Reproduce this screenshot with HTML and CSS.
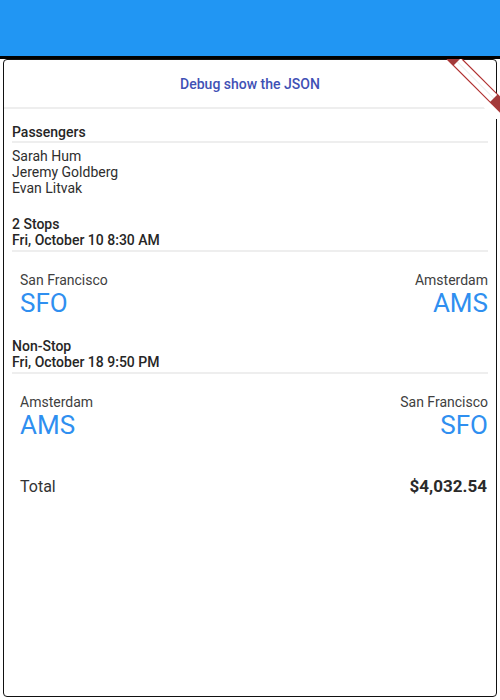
FILE: index.html
```html
<!DOCTYPE html>
<html>
<head>
<meta charset="utf-8">
<link rel="stylesheet" href="styles.css">
</head>
<body>
<div class="appbar"></div>
<div class="shadow"></div>
<div class="stage">
  <div class="card">
    <div class="card-head">Debug show the JSON</div>
    <div class="section">
      <div class="heading ruled">Passengers</div>
      <div class="passengers">
        <div>Sarah Hum</div>
        <div>Jeremy Goldberg</div>
        <div>Evan Litvak</div>
      </div>

      <div class="flight-head ruled">
        <div class="heading">2 Stops</div>
        <div class="heading">Fri, October 10 8:30 AM</div>
      </div>
      <div class="route">
        <div class="stop">
          <div class="city">San Francisco</div>
          <div class="code">SFO</div>
        </div>
        <div class="stop end">
          <div class="city">Amsterdam</div>
          <div class="code">AMS</div>
        </div>
      </div>

      <div class="flight-head ruled">
        <div class="heading">Non-Stop</div>
        <div class="heading">Fri, October 18 9:50 PM</div>
      </div>
      <div class="route">
        <div class="stop">
          <div class="city">Amsterdam</div>
          <div class="code">AMS</div>
        </div>
        <div class="stop end">
          <div class="city">San Francisco</div>
          <div class="code">SFO</div>
        </div>
      </div>

      <div class="total">
        <span>Total</span>
        <span class="amount">$4,032.54</span>
      </div>
    </div>
  </div>
  <svg class="banner" width="60" height="60" viewBox="0 0 60 60">
    <polygon points="7,0 22,0 70,48 55,63" fill="#ffffff"/>
    <line x1="14.5" y1="0" x2="62.5" y2="48" stroke="#e6e6e6" stroke-width="1"/>
    <line x1="7" y1="0" x2="67" y2="60" stroke="#b03030" stroke-width="1.2"/>
    <line x1="22" y1="0" x2="82" y2="60" stroke="#b03030" stroke-width="1.2"/>
    <polygon points="7,0 20,0 13.5,6.5" fill="#a33a3a"/>
    <polygon points="57.5,35.5 50,43 67,60 82,60" fill="#a33a3a"/>
  </svg>
</div>
</body>
</html>
```
FILE: styles.css
```css
html, body {
  margin: 0;
  padding: 0;
  background: #ffffff;
}
body {
  width: 500px;
  height: 700px;
  overflow: hidden;
  font-family: Roboto, "Liberation Sans", sans-serif;
  color: #2a2a2a;
}
.appbar {
  height: 56px;
  background: #2196f3;
}
.shadow {
  height: 3px;
  background: #000000;
}
.stage {
  position: relative;
  overflow: hidden;
  height: 641px;
}
.card {
  box-sizing: border-box;
  margin: 0 3px;
  height: 638px;
  border: 1px solid #111111;
  border-radius: 4px;
  background: #ffffff;
}
.card-head {
  height: 47px;
  display: flex;
  align-items: center;
  justify-content: center;
  border-bottom: 2px solid #eeeeee;
  color: #3f51b5;
  font-size: 14px;
  font-weight: 500;
}
.section {
  padding: 15px 8px 0;
}
.heading {
  font-size: 14px;
  line-height: 16px;
  font-weight: 500;
  color: #262626;
}
.ruled {
  border-bottom: 2px solid #eeeeee;
  padding-bottom: 1px;
}
.passengers {
  padding-top: 5px;
  font-size: 14px;
  line-height: 16px;
  color: #2e2e2e;
}
.flight-head {
  margin-top: 20px;
  padding-bottom: 2px;
}
.route {
  display: flex;
  justify-content: space-between;
  padding: 20px 0 0 8px;
}
.stop.end {
  text-align: right;
}
.city {
  font-size: 14px;
  line-height: 16px;
  color: #404040;
}
.code {
  font-size: 26px;
  line-height: 30px;
  color: #2f8ff0;
}
.total {
  display: flex;
  justify-content: space-between;
  align-items: baseline;
  margin-top: 37px;
  padding: 0 1px 0 8px;
  font-size: 16px;
  line-height: 19px;
  color: #333333;
}
.amount {
  font-size: 17px;
  font-weight: 700;
  color: #2a2a2a;
}
.banner {
  position: absolute;
  top: 0;
  right: 0;
}
```
